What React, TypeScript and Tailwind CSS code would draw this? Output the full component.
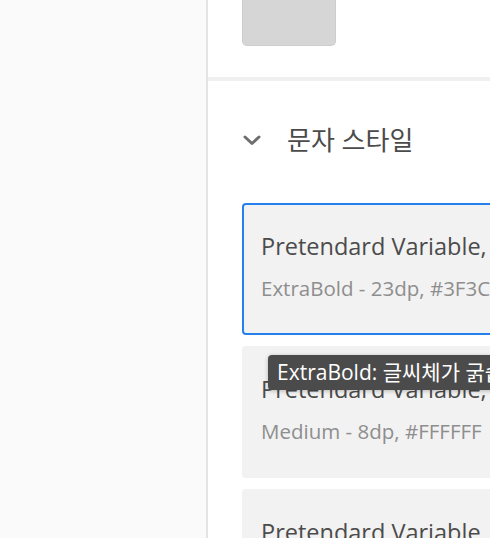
import React from 'react';

const font = { fontFamily: '"Open Sans", "Noto Sans CJK KR", sans-serif' };

function Chevron() {
  return (
    <svg width="18" height="12" viewBox="0 0 18 12" className="text-[#6e6e6e]">
      <path d="M2 3 L9 9.5 L16 3" fill="none" stroke="currentColor" strokeWidth="3" strokeLinecap="round" strokeLinejoin="round" />
    </svg>
  );
}

function StyleCard({ title, meta, selected }: { title: string; meta: string; selected?: boolean }) {
  return (
    <div
      className={
        selected
          ? 'h-[132px] w-[320px] shrink-0 rounded-[4px] border-2 border-[#2680eb] bg-[#f2f2f2] pl-[17px] pt-[26px]'
          : 'h-[132px] w-[320px] shrink-0 rounded-[4px] border-2 border-transparent bg-[#f2f2f2] pl-[17px] pt-[26px]'
      }
    >
      <div className="whitespace-nowrap text-[23.5px] leading-[30px] text-[#4b4b4b]">{title}</div>
      <div className="mt-[13px] whitespace-nowrap text-[20.5px] leading-[28px] text-[#8e8e8e]">{meta}</div>
    </div>
  );
}

export default function App() {
  return (
    <div className="flex h-[538px] w-[490px] overflow-hidden bg-white" style={font}>
      <aside className="w-[208px] shrink-0 border-r-2 border-[#e4e4e4] bg-[#fafafa]" />
      <main className="relative flex-1 overflow-hidden">
        <div className="pl-[34px]">
          <div className="h-[46px] w-[94px] rounded-b-[5px] border-x border-b border-[#cdcdcd] bg-[#d6d6d6]" />
        </div>
        <div className="mt-[31px] h-[4px] bg-[#f0f0f0]" />
        <div className="flex h-[122px] items-center gap-[26px] pb-[4px] pl-[35px]">
          <Chevron />
          <span className="text-[26px] text-[#4b4b4b]">문자 스타일</span>
        </div>
        <div className="flex flex-col gap-[11px] pl-[34px]">
          <StyleCard selected title="Pretendard Variable, 16" meta="ExtraBold - 23dp, #3F3C3C" />
          <StyleCard title="Pretendard Variable, 16" meta="Medium - 8dp, #FFFFFF" />
          <StyleCard title="Pretendard Variable, 16" meta="Regular - 14dp, #3F3C3C" />
        </div>
        <div className="absolute left-[60px] top-[355px] h-[35px] whitespace-nowrap rounded-[4px] bg-[#4b4b4b] px-[9px] text-[21px] leading-[35px] text-white shadow-[0_1px_4px_rgba(0,0,0,0.25)]">
          ExtraBold: 글씨체가 굵습니다
        </div>
      </main>
    </div>
  );
}
